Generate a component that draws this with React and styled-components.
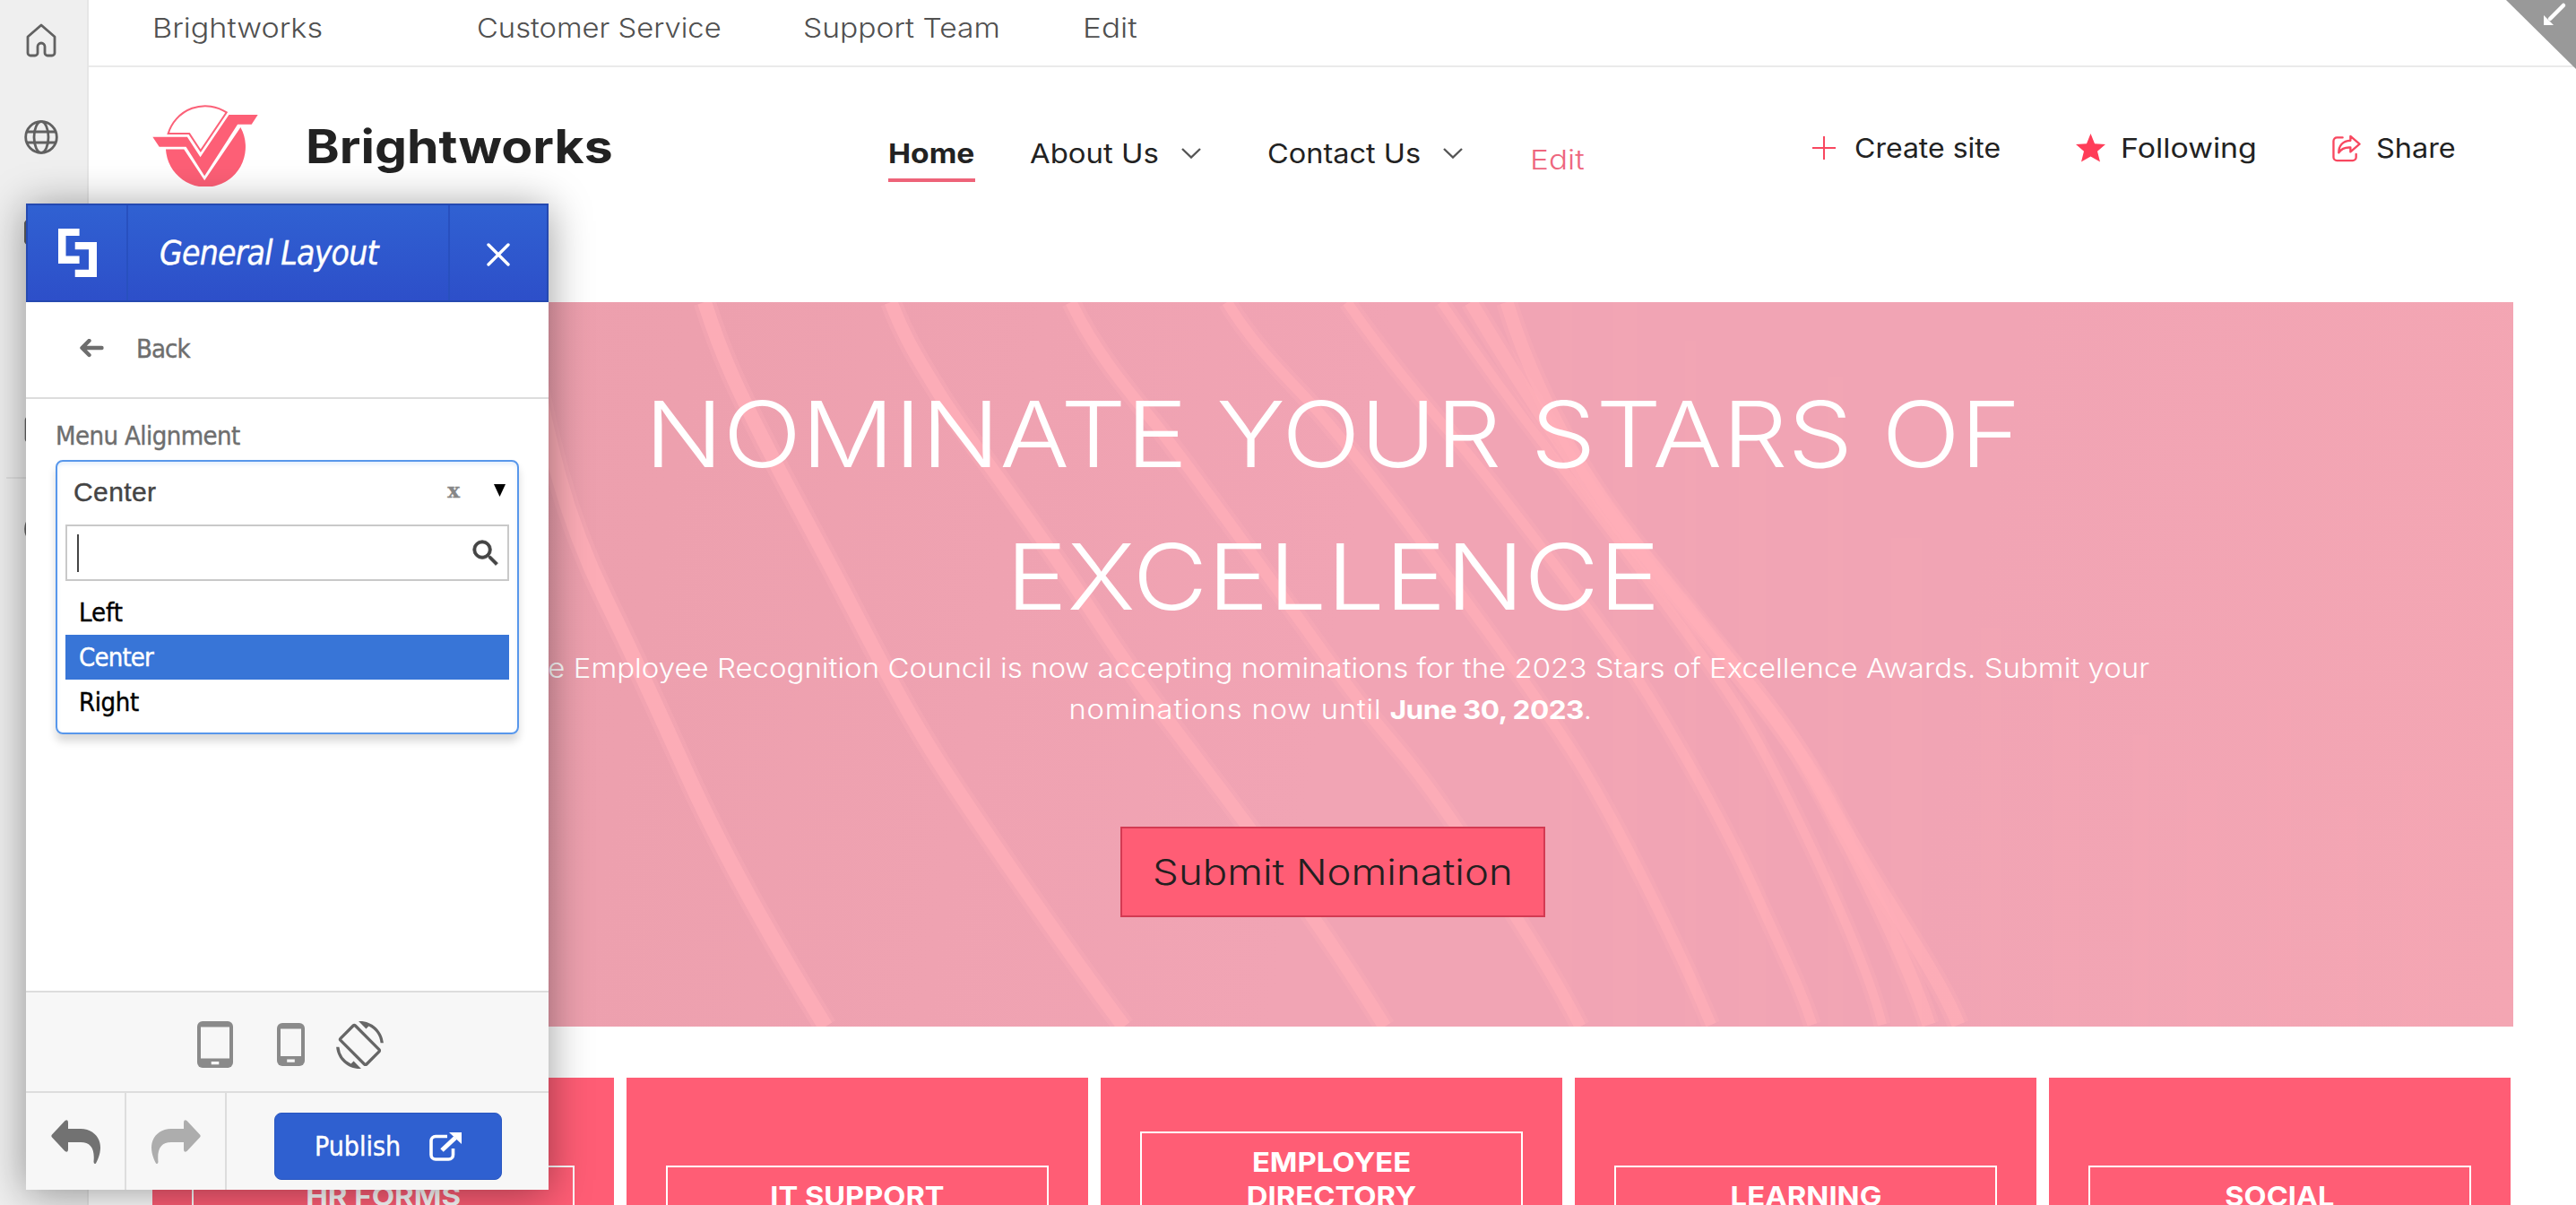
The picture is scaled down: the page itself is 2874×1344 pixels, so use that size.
import React from 'react'
import styled, { createGlobalStyle } from 'styled-components'
import { MdScreenRotation, MdSearch } from 'react-icons/md'

const GlobalStyle = createGlobalStyle`
  * {
    box-sizing: border-box;
  }

  body {
    margin: 0;
    background: #fff;
    color: #222;
    font-family: Inter, 'Open Sans', sans-serif;
    font-size: 30px;
  }
`

const Page = styled.div`
  position: relative;
  display: flex;
  width: 2874px;
  height: 1344px;
  overflow: hidden;
`

const AppBar = styled.aside`
  display: flex;
  flex: none;
  flex-direction: column;
  width: 99px;
  padding-left: 27px;
  background: #efefef;
  border-right: 2px solid #e6e6e6;
  color: #616161;

  svg {
    display: block;
  }
`

const AppBarItem = styled.div`
  height: ${(props) => props.$height}px;
  padding-top: ${(props) => props.$top || 0}px;
`

const AppBarRule = styled.hr`
  width: 64px;
  height: 2px;
  margin: 30px 0 0 -20px;
  border: 0;
  background: #e0e0e0;
`

const Main = styled.main`
  display: flex;
  flex: 1;
  flex-direction: column;
  min-width: 0;
`

const Label = styled.span`
  display: inline-block;
  justify-self: start;
  transform: scaleX(${(props) => props.$stretch || 1});
  transform-origin: ${(props) => (props.$centered ? 'center' : 'left')};
`

const HubNav = styled.nav`
  display: grid;
  grid-template-columns: 362px 364px 312px auto;
  flex: none;
  height: 75px;
  padding: 13px 0 0 71px;
  border-bottom: 2px solid #eaeaea;
  color: #505050;
  font-weight: 300;
  line-height: 36px;
  white-space: nowrap;
`

const SiteHeader = styled.header`
  display: flex;
  align-items: flex-start;
  flex: none;
  height: 262px;
  padding-left: 71px;
`

const SiteLogo = styled.svg`
  width: 118px;
  height: 91px;
  margin-top: 42px;
`

const SiteTitle = styled.h1`
  width: 350px;
  margin: 59px 0 0 53px;
  font-size: 52px;
  font-weight: 700;
  line-height: 60px;
`

const MainNav = styled.nav`
  display: grid;
  grid-template-columns: 158px 265px 293px auto;
  align-items: start;
  justify-items: start;
  width: 780px;
  margin: 78px 0 0 300px;
  line-height: 36px;
  white-space: nowrap;
`

const NavLink = styled.a`
  display: flex;
  align-items: center;
  justify-content: space-between;
  width: ${(props) => props.$width}px;
`

const ActiveLink = styled.a`
  width: 97px;
  padding-bottom: 10px;
  border-bottom: 4px solid #ee6379;
  font-weight: 700;
`

const EditLink = styled.a`
  margin-top: 7px;
  color: #ee667e;
  font-weight: 300;
`

const SiteActions = styled.div`
  display: grid;
  grid-template-columns: 294px 286px auto;
  margin: 72px 0 0 251px;
  line-height: 36px;
  white-space: nowrap;
`

const SiteAction = styled.div`
  display: flex;
  align-items: center;
  gap: 17px;
`

const Hero = styled.section`
  position: relative;
  display: flex;
  flex: none;
  flex-direction: column;
  align-items: center;
  width: 2634px;
  height: 808px;
  margin-left: 71px;
  padding-top: 68px;
  background: linear-gradient(100deg, #ec9eac 0%, #eda0ae 22%, #f1a4b4 50%, #f1a4b4 75%, #f4a6b3 100%);
  color: #fff;
  text-align: center;
  white-space: nowrap;
`

const HeroLines = styled.svg`
  position: absolute;
  inset: 0;
  width: 100%;
  height: 100%;
`

const HeroTitle = styled.h2`
  position: relative;
  margin: 0;
  font-size: 102px;
  font-weight: 300;
  line-height: 158.5px;
`

const HeroText = styled.p`
  position: relative;
  margin: 0;
  padding-right: 6px;
  font-weight: 300;
  line-height: 46px;

  b {
    font-size: 29px;
    font-weight: 700;
    letter-spacing: -0.5px;
  }
`

const Spaced = styled.span`
  letter-spacing: 0.8px;
`

const HeroButton = styled.button`
  position: relative;
  width: 474px;
  height: 101px;
  margin-top: 107px;
  padding: 0;
  background: #ff5d75;
  border: 2px solid #d33a52;
  color: #231f20;
  font: 300 39px Inter, sans-serif;
`

const Tiles = styled.section`
  display: grid;
  grid-template-columns: repeat(5, 515px);
  gap: 14px;
  flex: none;
  margin: 57px 0 0 71px;
`

const Tile = styled.article`
  display: flex;
  align-items: flex-end;
  height: 226px;
  padding: 0 44px 60px;
  background: #ff5d75;
`

const TileTitle = styled.h3`
  display: flex;
  justify-content: center;
  width: 100%;
  margin: 0;
  padding: 13px 90px;
  border: 2px solid #fff;
  color: #fff;
  font-size: 30px;
  font-weight: 700;
  line-height: 38px;
  text-align: center;
`

const Corner = styled.svg`
  position: absolute;
  top: 0;
  right: 0;
  width: 78px;
  height: 77px;
`

const Panel = styled.div`
  position: absolute;
  top: 227px;
  left: 29px;
  display: flex;
  flex-direction: column;
  width: 583px;
  height: 1100px;
  background: #fff;
  box-shadow: 0 4px 44px rgba(0, 0, 0, 0.4);
  color: #6e6e6e;
  font-family: 'DejaVu Sans Condensed', 'DejaVu Sans', sans-serif;
  font-size: 29px;
  -webkit-text-stroke: 0.4px currentColor;
`

const PanelHeader = styled.div`
  display: grid;
  grid-template-columns: 112px 1fr 108px;
  height: 110px;
  background: linear-gradient(#3061d2, #2d4fc9);
  border: 2px solid #2549b0;
  color: #fff;
`

const HeaderCell = styled.div`
  display: flex;
  align-items: center;
  justify-content: ${(props) => (props.$start ? 'flex-start' : 'center')};
  padding-left: ${(props) => (props.$start ? 35 : 0)}px;
  border-right: ${(props) => (props.$last ? 0 : '2px solid #2850bf')};
`

const PanelTitle = styled.div`
  font-size: 37px;
  font-style: italic;
  letter-spacing: -0.8px;
  white-space: nowrap;
`

const BackRow = styled.div`
  display: flex;
  align-items: center;
  gap: 36px;
  height: 108px;
  padding: 0 0 3px 60px;
  border-bottom: 2px solid #ddd;
  letter-spacing: -0.9px;
`

const PanelBody = styled.div`
  flex: 1;
  padding: 23px 33px 0;
`

const FieldLabel = styled.div`
  letter-spacing: -0.57px;
  line-height: 36px;
`

const Select = styled.div`
  height: 306px;
  margin-top: 9px;
  border: 2px solid #5897eb;
  border-radius: 8px;
  box-shadow: 0 8px 10px rgba(0, 0, 0, 0.15), inset 0 3px 4px rgba(88, 151, 235, 0.15);
`

const SelectValue = styled.div`
  display: flex;
  align-items: center;
  height: 68px;
  padding: 0 13px 0 18px;
  color: #444;
  font-family: 'Liberation Sans', Arial, sans-serif;
  font-size: 30px;
  letter-spacing: 0.4px;
`

const ClearMark = styled.span`
  margin: -5px 38px 0 auto;
  color: #868686;
  font: bold 23px 'DejaVu Serif', serif;
  letter-spacing: 0;
`

const Caret = styled.svg`
  width: 13px;
  height: 14px;
  margin-top: -4px;
`

const SearchBox = styled.div`
  display: flex;
  align-items: center;
  justify-content: space-between;
  height: 63px;
  margin: 2px 9px 10px;
  padding: 0 5px 0 11px;
  border: 2px solid #c9c9c9;
  color: #444;

  path:last-child {
    stroke: #444;
    stroke-width: 0.5px;
  }
`

const TextCursor = styled.span`
  width: 2px;
  height: 42px;
  background: #444;
`

const Option = styled.div`
  margin: 0 9px;
  padding-left: 15px;
  background: ${(props) => (props.$active ? '#3875d7' : 'transparent')};
  color: ${(props) => (props.$active ? '#fff' : '#000')};
  letter-spacing: ${(props) => props.$spacing || 0}px;
  line-height: 50px;
`

const Devices = styled.div`
  display: flex;
  align-items: center;
  height: 112px;
  padding: 6px 0 0 191px;
  background: #f7f7f7;
  border-top: 2px solid #ddd;
  color: #666;
`

const PhoneButton = styled.div`
  display: flex;
  margin: 0 35px 0 49px;
`

const Toolbar = styled.div`
  display: flex;
  height: 110px;
  background: #f7f7f7;
  border-top: 2px solid #ddd;
`

const ToolButton = styled.div`
  display: flex;
  align-items: center;
  justify-content: center;
  width: 112px;
  border-right: 2px solid #ddd;
  color: ${(props) => (props.$disabled ? '#adadad' : '#727272')};

  svg {
    transform: ${(props) => (props.$disabled ? 'scaleX(-1)' : 'none')};
  }
`

const PublishButton = styled.button`
  display: flex;
  align-items: center;
  justify-content: space-between;
  width: 254px;
  height: 75px;
  margin: 22px 0 0 53px;
  padding: 0 44px;
  background: #2f60d0;
  border: 1px solid #2a57c0;
  border-radius: 8px;
  color: #fff;
  font: 30px 'DejaVu Sans Condensed', 'DejaVu Sans', sans-serif;
  -webkit-text-stroke: 0.4px currentColor;
`

const streaks = [
  { d: 'M580 337Q604 460 623 530T676 669T765 860T921 1145', w: 20 },
  { d: 'M786 337C806 400 826 440 852 491S905 590 937 651S1008 790 1054 860S1190 1060 1254 1145', w: 19 },
  { d: 'M994 337C1010 380 1030 410 1051 444S1165 600 1212 673S1300 800 1346 860S1480 1040 1545 1145', w: 18 },
  { d: 'M1195 337C1220 390 1258 435 1289 473S1420 650 1480 733S1545 815 1580 860S1720 1060 1763 1145', w: 16 },
  { d: 'M1369 337C1395 380 1425 410 1457 444S1550 555 1595 616S1710 770 1754 838S1870 1050 1909 1143', w: 15 },
  { d: 'M1503 337C1540 390 1585 445 1625 491S1758 660 1803 722S1920 910 1957 992S2008 1100 2022 1143', w: 14 },
  { d: 'M1608 337C1650 400 1700 468 1746 526S1910 740 1949 806S2080 1060 2100 1143', w: 13 },
  { d: 'M1641 337C1690 420 1750 510 1803 584S1965 770 2006 838S2125 1060 2152 1143', w: 18 },
  { d: 'M1681 337C1700 400 1735 480 1790 560S1985 790 2039 891S2160 1080 2185 1143', w: 18 },
]

// x, top, width of the faint vertical bands on the right of the banner
const bands = [
  [1740, 337, 14],
  [1800, 337, 26],
  [1880, 380, 12],
  [1940, 500, 30],
  [2040, 420, 16],
  [2110, 600, 34],
  [2210, 700, 22],
  [2290, 760, 30],
  [2380, 820, 16],
  [2440, 870, 34],
  [2530, 780, 26],
  [2610, 900, 20],
  [2680, 860, 30],
]

const tiles = [
  { title: 'HR FORMS', stretch: 1.1 },
  { title: 'IT SUPPORT', stretch: 1.086 },
  { title: 'EMPLOYEE DIRECTORY', stretch: 1.094 },
  { title: 'LEARNING', stretch: 1.096 },
  { title: 'SOCIAL', stretch: 1.083 },
]

function Chevron() {
  return (
    <svg width="22" height="12" viewBox="0 0 22 12" fill="none" stroke="#555" strokeWidth="2.4">
      <path d="M1 1l10 9.500L21 1" />
    </svg>
  )
}

function UndoArrow() {
  return (
    <svg width="55" height="49" viewBox="0 0 55 49" fill="currentColor">
      <path d="M1 16.5L15.5 1Q19 -1 19 3V10H33C47 10 55 20 55 31C55 38 52 45 50 48.5Q48 50 47.5 47C49 32 44 25 33 25H19V33Q19 37 15.5 35L1 19.5Q-.3 18 1 16.5Z" />
    </svg>
  )
}

function Device({ width, height, inset, bottom, button }) {
  return (
    <svg width={width} height={height}>
      <rect width={width} height={height} rx="6" fill="#8a8a8a" />
      <rect x={inset} y="6.5" width={width - inset * 2} height={bottom - 6.5} fill="#f7f7f7" />
      <rect x={width / 2 - 4.3} y={button} width="8.6" height="3.3" fill="#f7f7f7" />
    </svg>
  )
}

export default function App() {
  return (
    <>
      <GlobalStyle />
      <Page>
        <AppBar>
          <AppBarItem $top={26} $height={134}>
            <svg
              width="38"
              height="38"
              viewBox="-2 0 38 38"
              fill="none"
              stroke="currentColor"
              strokeWidth="2.8"
              strokeLinejoin="round"
            >
              <path d="M17 2L2 15V33a3 3 0 0 0 3 3h5a3 3 0 0 0 3-3V26a4 4 0 0 1 8 0v7a3 3 0 0 0 3 3h5a3 3 0 0 0 3-3V15Z" />
            </svg>
          </AppBarItem>
          <AppBarItem $height={110}>
            <svg width="38" height="38" viewBox="0 0 38 38" fill="none" stroke="currentColor" strokeWidth="2.8">
              <circle cx="19" cy="19" r="17.3" />
              <ellipse cx="19" cy="19" rx="8" ry="17.3" />
              <path d="M2.5 13H35.5M2.5 25H35.5" />
            </svg>
          </AppBarItem>
          <AppBarItem $height={220}>
            <svg width="38" height="30" fill="none" stroke="currentColor" strokeWidth="2.6">
              <rect x="1" y="1.5" width="35" height="27" rx="5" />
            </svg>
          </AppBarItem>
          <AppBarItem $height={38}>
            <svg width="38" height="30" fill="none" stroke="currentColor" strokeWidth="2.6">
              <rect x="2" y="1.5" width="33" height="27" rx="3" />
            </svg>
          </AppBarItem>
          <AppBarRule />
          <AppBarItem $top={37} $height={80}>
            <svg width="38" height="38" fill="none" stroke="currentColor" strokeWidth="2.6">
              <circle cx="19" cy="19" r="17.5" />
            </svg>
          </AppBarItem>
        </AppBar>

        <Main>
          <HubNav>
            <Label $stretch={1.138}>Brightworks</Label>
            <Label $stretch={1.092}>Customer Service</Label>
            <Label $stretch={1.12}>Support Team</Label>
            <Label $stretch={1.17}>Edit</Label>
          </HubNav>

          <SiteHeader>
            <SiteLogo viewBox="30 50 355 272" preserveAspectRatio="none">
              <path
                d="M83 146A130 130 0 0 1 279 75L192 203L154 146Z"
                fill="#fff"
                stroke="#fb6178"
                strokeWidth="6"
              />
              <path d="M31 157H147L191 224L287 83H384L363 115H316L205 287L143 190H53Z" fill="#fd5f76" />
              <path d="M75 198H136L205 302L326 125A134 134 0 1 1 75 198Z" fill="#fd5f76" />
            </SiteLogo>
            <SiteTitle>
              <Label $stretch={1.098}>Brightworks</Label>
            </SiteTitle>
            <MainNav>
              <ActiveLink>
                <Label $stretch={1.12}>Home</Label>
              </ActiveLink>
              <NavLink $width={191}>
                <Label $stretch={1.097}>About Us</Label>
                <Chevron />
              </NavLink>
              <NavLink $width={218}>
                <Label $stretch={1.083}>Contact Us</Label>
                <Chevron />
              </NavLink>
              <EditLink>
                <Label $stretch={1.17}>Edit</Label>
              </EditLink>
            </MainNav>
            <SiteActions>
              <SiteAction>
                <svg width="30" height="28" stroke="#f8475f" strokeWidth="2">
                  <path d="M0 14H26M13 1V27" />
                </svg>
                <Label $stretch={1.067}>Create site</Label>
              </SiteAction>
              <SiteAction>
                <svg width="33" height="32" viewBox="0 0 33 32" fill="#ff3d58">
                  <path d="M16.5 0L21 11.2L33 12L24 19.8L27 31.5L16.5 25.5L6 31.5L9 19.8L0 12L12 11.2Z" />
                </svg>
                <Label $stretch={1.13}>Following</Label>
              </SiteAction>
              <SiteAction>
                <svg
                  width="32"
                  height="31"
                  viewBox="0 0 33 31"
                  fill="none"
                  stroke="#f8475f"
                  strokeWidth="2.4"
                  strokeLinejoin="round"
                >
                  <path
                    d="M12 3H5.5A4 4 0 0 0 1.5 7V25.5A4 4 0 0 0 5.5 29.5H23.5A4 4 0 0 0 27.5 25.5V22"
                    strokeLinecap="round"
                  />
                  <path d="M21 1.5L31.5 10.5L21 19.5V14.5C14.5 14 10.5 16 7.5 20.5C7.5 12.5 12 7 21 6.5Z" />
                </svg>
                <Label $stretch={1.08}>Share</Label>
              </SiteAction>
            </SiteActions>
          </SiteHeader>

          <Hero>
            <HeroLines viewBox="170 337 2634 808" preserveAspectRatio="none">
              {bands.map(([x, y, w]) => (
                <rect key={x} x={x} y={y} width={w} height={1145 - y} fill="#f6a8b3" opacity="0.25" />
              ))}
              <g fill="none" stroke="#ffaeb8">
                {streaks.map((s) => (
                  <g key={s.d}>
                    <path d={s.d} strokeWidth={s.w + 6} opacity="0.3" />
                    <path d={s.d} strokeWidth={s.w - 3} opacity="0.72" />
                  </g>
                ))}
              </g>
            </HeroLines>
            <HeroTitle>
              <Label $centered $stretch={1.129}>
                NOMINATE YOUR STARS OF
              </Label>
              <br />
              <Label $centered $stretch={1.125}>
                EXCELLENCE
              </Label>
            </HeroTitle>
            <HeroText>
              <Label $centered $stretch={1.1}>
                The Employee Recognition Council is now accepting nominations for the 2023 Stars of Excellence Awards.
                Submit your
              </Label>
              <br />
              <Label $centered $stretch={1.088}>
                <Spaced>nominations now until</Spaced> <b>June 30, 2023</b>.
              </Label>
            </HeroText>
            <HeroButton>
              <Label $centered $stretch={1.168}>
                Submit Nomination
              </Label>
            </HeroButton>
          </Hero>

          <Tiles>
            {tiles.map((tile) => (
              <Tile key={tile.title}>
                <TileTitle>
                  <Label $centered $stretch={tile.stretch}>
                    {tile.title}
                  </Label>
                </TileTitle>
              </Tile>
            ))}
          </Tiles>
        </Main>

        <Corner viewBox="0 0 78 77">
          <path d="M0 0H78V77Z" fill="#999" />
          <path d="M64 6L49 21" stroke="#fff" strokeWidth="4.5" strokeLinecap="round" />
          <path d="M42 17V28H53Z" fill="#fff" />
        </Corner>

        <Panel>
          <PanelHeader>
            <HeaderCell>
              <svg width="43" height="54" viewBox="0 0 43 54" fill="#fff">
                <path d="M0 0H23.6V8H8.5V30.5H23.6V39H0Z" />
                <path d="M18.7 15H43V54H18.7V45.7H34V23.3H18.7Z" />
              </svg>
            </HeaderCell>
            <HeaderCell $start>
              <PanelTitle>General Layout</PanelTitle>
            </HeaderCell>
            <HeaderCell $last>
              <svg width="26" height="30" stroke="#fff" strokeWidth="3.4" strokeLinecap="round">
                <path d="M2 6L24 28M24 6L2 28" />
              </svg>
            </HeaderCell>
          </PanelHeader>
          <BackRow>
            <svg
              width="27"
              height="22"
              fill="none"
              stroke="currentColor"
              strokeWidth="4.4"
              strokeLinecap="round"
              strokeLinejoin="round"
            >
              <path d="M10.5 2L2.5 10L10.5 18M3 10H24.5" />
            </svg>
            Back
          </BackRow>
          <PanelBody>
            <FieldLabel>Menu Alignment</FieldLabel>
            <Select>
              <SelectValue>
                Center
                <ClearMark>x</ClearMark>
                <Caret viewBox="0 0 13 14">
                  <path d="M0 0H13L6.5 14Z" fill="#000" />
                </Caret>
              </SelectValue>
              <SearchBox>
                <TextCursor />
                <MdSearch size={38} />
              </SearchBox>
              <Option>Left</Option>
              <Option $active $spacing={-0.8}>
                Center
              </Option>
              <Option $spacing={-0.4}>Right</Option>
            </Select>
          </PanelBody>
          <Devices>
            <Device width={40} height={52} inset={4} bottom={41.5} button={45} />
            <PhoneButton>
              <Device width={31} height={48} inset={4} bottom={37} button={40.5} />
            </PhoneButton>
            <MdScreenRotation size={53} />
          </Devices>
          <Toolbar>
            <ToolButton>
              <UndoArrow />
            </ToolButton>
            <ToolButton $disabled>
              <UndoArrow />
            </ToolButton>
            <PublishButton>
              Publish
              <svg width="36" height="32" viewBox="0 0 36 32" fill="none" stroke="#fff" strokeWidth="3.6">
                <path d="M20 4.5H7A5 5 0 0 0 2 9.5V25A5 5 0 0 0 7 30H21.5A5 5 0 0 0 26.5 25V18" />
                <path d="M14 20L29 6" strokeWidth="5" />
                <path d="M22 0H36V13Z" fill="#fff" stroke="none" />
              </svg>
            </PublishButton>
          </Toolbar>
        </Panel>
      </Page>
    </>
  )
}
